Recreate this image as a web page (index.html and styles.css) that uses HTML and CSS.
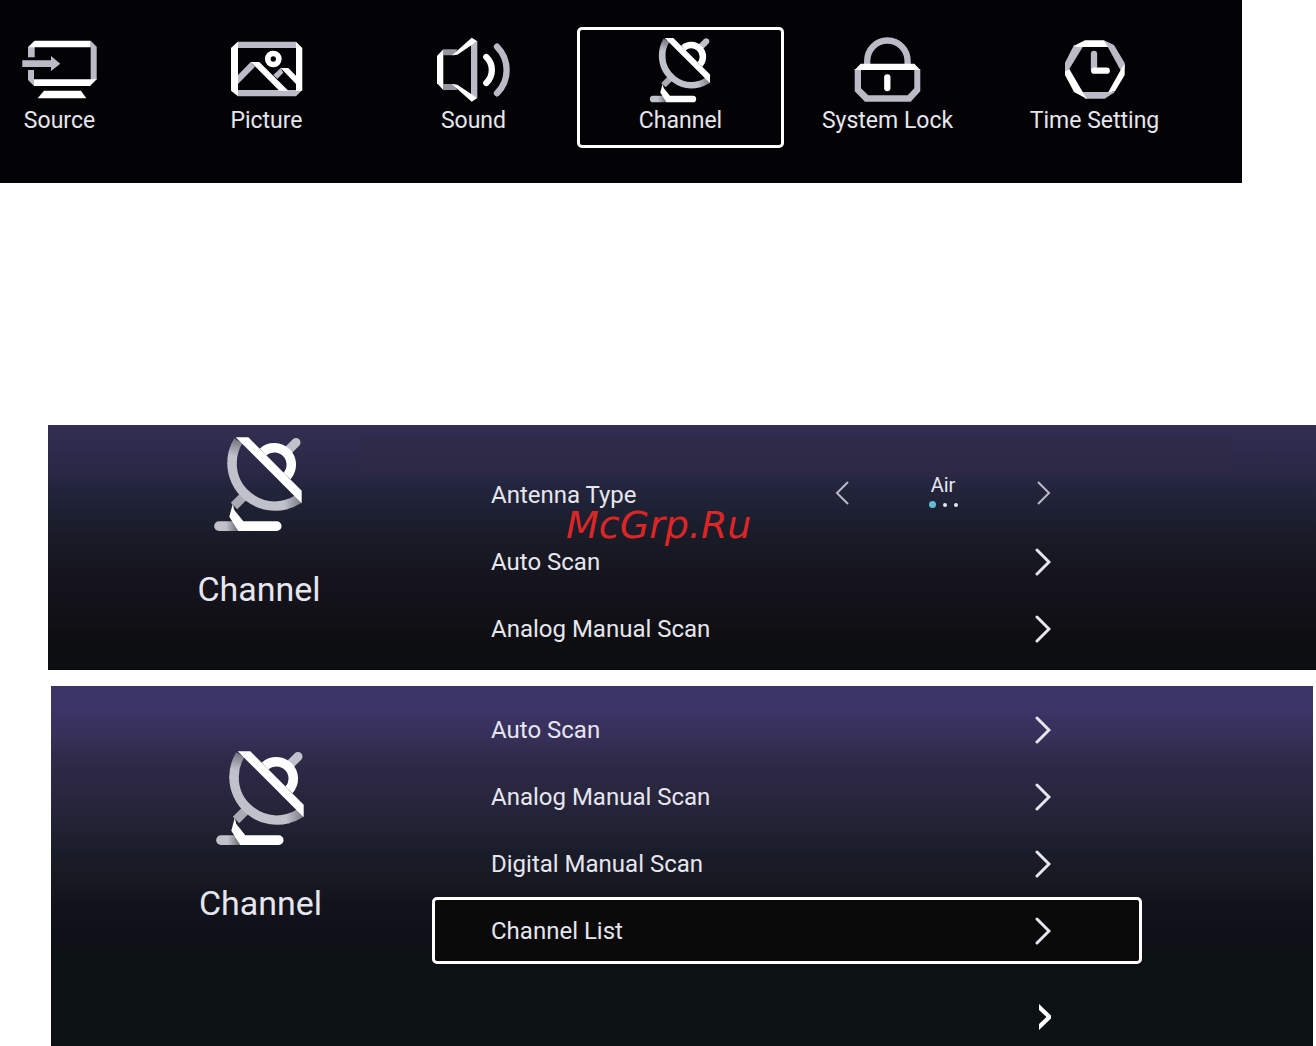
FILE: index.html
```
<!DOCTYPE html>
<html lang="en">
<head>
    <meta charset="UTF-8">
    <meta name="viewport" content="width=device-width, initial-scale=1.0">
    <title>Channel</title>
    <link rel="stylesheet" href="styles.css">
</head>
<body>
    <!-- shared icons -->
    <svg class="defs" width="0" height="0" aria-hidden="true">
        <defs>
            <linearGradient id="foldBowl" gradientUnits="userSpaceOnUse" x1="22" y1="2" x2="19" y2="20">
                <stop offset="0" stop-color="#6f7078"/>
                <stop offset="1" stop-color="#bfc1cb"/>
            </linearGradient>
            <linearGradient id="foldBase" gradientUnits="userSpaceOnUse" x1="12" y1="0" x2="23" y2="0">
                <stop offset="0" stop-color="#bfc1cb"/>
                <stop offset="1" stop-color="#70717a"/>
            </linearGradient>
            <linearGradient id="foldEnd" gradientUnits="userSpaceOnUse" x1="70" y1="0" x2="88" y2="0">
                <stop offset="0" stop-color="#bfc1cb"/>
                <stop offset="1" stop-color="#77787f"/>
            </linearGradient>
        </defs>
        <symbol id="dish" viewBox="0 0 88 96">
            <path d="M75 13.500L82 6.500" stroke="#bfc1cb" stroke-width="9" stroke-linecap="round"/>
            <path d="M30 60L20 70" stroke="#a9abb4" stroke-width="9"/>
            <path d="M18 27A43 43 0 0 0 72 68.600" fill="none" stroke="#bfc1cb" stroke-width="9.500"/>
            <path d="M24.300 4.700A43 43 0 0 0 18 28" fill="none" stroke="url(#foldBowl)" stroke-width="9.500"/>
            <path d="M71 68.900A43 43 0 0 0 84.500 63" fill="none" stroke="url(#foldEnd)" stroke-width="9.500"/>
            <path d="M49 16A17 17 0 0 1 73 40" fill="none" stroke="#fff" stroke-width="9.500"/>
            <path d="M21.700 1.300H34.300L87.700 54.700V67.300Z" fill="#fff"/>
            <path d="M5 85.300H22L25 95H5A4.800 4.800 0 0 1 5 85.300Z" fill="url(#foldBase)"/>
            <path d="M18.700 68L15.300 80.700L24.300 95H62.700A4.800 4.800 0 0 0 62.700 85.300H29.300L20.300 74Z" fill="#fff"/>
        </symbol>
        <symbol id="chevron" viewBox="0 0 16 28">
            <path d="M2 2L14 14L2 26" fill="none" stroke="currentColor" stroke-width="3" stroke-linecap="round"/>
        </symbol>
        <symbol id="chevron-thin" viewBox="0 0 14 24">
            <path d="M1 1L12 12L1 23" fill="none" stroke="currentColor" stroke-width="2"/>
        </symbol>
        <symbol id="chevron-bold" viewBox="0 0 12 28">
            <path d="M0 1L12 12.500V15.500L0 27V21L7.500 14L0 7Z" fill="currentColor"/>
        </symbol>
    </svg>

    <nav class="topbar">
        <div class="menu">
            <button class="menu-item">
                <svg class="menu-icon" viewBox="0 0 88 66">
                    <g fill="#bbbbc7">
                        <path d="M75.700 3.700L81.700 9.700V43H75.700Z"/>
                        <path d="M13 10L19.700 3.700V20.300H13Z"/>
                        <path d="M13 33H19V49L13 43Z"/>
                        <path d="M7.300 23.300H36V19L45.300 26.700L36 34V30H7.300Z"/>
                    </g>
                    <g fill="#fff">
                        <path d="M19.700 3.700H75.700V10.300H13.300Z"/>
                        <path d="M19 42.300H81.700L75 49H19Z"/>
                        <path d="M29 53.700H66L71.300 61.300H22.700Z"/>
                    </g>
                </svg>
                <span>Source</span>
            </button>
            <button class="menu-item">
                <svg class="menu-icon" viewBox="0 0 88 66">
                    <g fill="#bbbbc7">
                        <path d="M16 4.700H74V11H9.300Z"/>
                        <path d="M16 53H80.300L74 59.300H16Z"/>
                        <path d="M28.700 25L33 29.700L16 47V38Z"/>
                        <path d="M58.700 31L61.300 35.700L55.300 41.700L51.300 38Z"/>
                    </g>
                    <g fill="#fff">
                        <path d="M74 4.700L80.300 11V53.700H74Z"/>
                        <path d="M9 11L16 4.700V59.300L9 53.700Z"/>
                        <path d="M28.700 25H37.300L66.300 53.700H57.300Z"/>
                        <path d="M58.700 31H66.300L74 38.700V47Z"/>
                    </g>
                    <circle cx="51.300" cy="22" r="5.500" fill="none" stroke="#fff" stroke-width="5.700"/>
                </svg>
                <span>Picture</span>
            </button>
            <button class="menu-item">
                <svg class="menu-icon" viewBox="0 0 88 66">
                    <g fill="#bbbbc7">
                        <path d="M42 8L48.300 4.300V61L42 57.400Z"/>
                    </g>
                    <g fill="#9696a0">
                        <path d="M14.300 12.300H28.300L25 18.300H14.300Z"/>
                        <path d="M14.300 47H25L28.300 53H14.300Z"/>
                    </g>
                    <g fill="#fff">
                        <path d="M8 19L14.300 12.300V53L8 46.300Z"/>
                        <path d="M42.700 0.700L48.300 4.300L28.300 17.700L23 18.300L27 14.700Z"/>
                        <path d="M42.700 64.700L48.300 61L28.300 47.700L23 47L27 50.700Z"/>
                    </g>
                    <g fill="none" stroke-width="6.300" stroke-linecap="round">
                        <path d="M57.300 20A18 18 0 0 1 57.300 46" stroke="#fff"/>
                        <path d="M68 9.700A33 33 0 0 1 68 56.300" stroke="#bbbbc7"/>
                    </g>
                </svg>
                <span>Sound</span>
            </button>
            <button class="menu-item selected">
                <svg class="menu-icon"><use href="#dish"/></svg>
                <span>Channel</span>
            </button>
            <button class="menu-item">
                <svg class="menu-icon" viewBox="0 0 88 66">
                    <path d="M24.200 28V23.700A20.200 20.200 0 0 1 64.600 23.700V28" fill="none" stroke="#bbbbc7" stroke-width="6.300"/>
                    <path d="M11.700 32V54.300L22 64.700H67.700L77.300 54.300V32H71.300V51.300L64.700 58.300H25.300L18 51.300V32Z" fill="#bbbbc7"/>
                    <path d="M17.700 26.700H71.300L77.300 33H11.700Z" fill="#fff"/>
                    <path d="M44.300 40.300V51" stroke="#fff" stroke-width="6.300" stroke-linecap="round"/>
                </svg>
                <span>System Lock</span>
            </button>
            <button class="menu-item">
                <svg class="menu-icon" viewBox="0 0 88 66">
                    <g fill="#bbbbc7">
                        <path d="M54 3.300L64 8L74.700 26V31L72 36L57.300 9Z"/>
                        <path d="M33 55H65L54.700 61.700H35Z"/>
                        <path d="M24 8L33 9.500L19.300 32L15 37V25.700Z"/>
                    </g>
                    <g fill="#fff">
                        <path d="M35 3.300H54L58.300 10H26L24.500 8.500Z"/>
                        <path d="M74.700 26.700V38L65 54.300L58 55.700L69.500 35Z"/>
                        <path d="M15 34.700L19.300 32L36.700 61.700L24 55L15 38Z"/>
                    </g>
                    <g stroke-width="6.300" stroke-linecap="round">
                        <path d="M44 17V33" stroke="#bbbbc7"/>
                        <path d="M44.300 33.700H56.700" stroke="#fff"/>
                    </g>
                </svg>
                <span>Time Setting</span>
            </button>
        </div>
    </nav>

    <main>
        <section class="panel panel-antenna">
            <div class="side">
                <svg class="side-icon"><use href="#dish"/></svg>
                <h2>Channel</h2>
            </div>
            <div class="list">
                <div class="row">
                    <span>Antenna Type</span>
                    <div class="stepper">
                        <button aria-label="Previous"><svg class="thin flip"><use href="#chevron-thin"/></svg></button>
                        <div class="value">
                            <span>Air</span>
                            <div class="dots"><i class="on"></i><i></i><i></i></div>
                        </div>
                        <button aria-label="Next"><svg class="thin"><use href="#chevron-thin"/></svg></button>
                    </div>
                </div>
                <button class="row"><span>Auto Scan</span><svg class="chevron"><use href="#chevron"/></svg></button>
                <button class="row"><span>Analog Manual Scan</span><svg class="chevron"><use href="#chevron"/></svg></button>
            </div>
            <div class="watermark">McGrp.Ru</div>
        </section>

        <section class="panel panel-channel">
            <div class="side">
                <svg class="side-icon"><use href="#dish"/></svg>
                <h2>Channel</h2>
            </div>
            <div class="list">
                <button class="row"><span>Auto Scan</span><svg class="chevron"><use href="#chevron"/></svg></button>
                <button class="row"><span>Analog Manual Scan</span><svg class="chevron"><use href="#chevron"/></svg></button>
                <button class="row"><span>Digital Manual Scan</span><svg class="chevron"><use href="#chevron"/></svg></button>
                <button class="row selected"><span>Channel List</span><svg class="chevron"><use href="#chevron"/></svg></button>
                <button class="row more" aria-label="More"><svg class="bold"><use href="#chevron-bold"/></svg></button>
            </div>
        </section>
    </main>
</body>
</html>
```
FILE: styles.css
```
* {
    box-sizing: border-box;
}
body {
    margin: 0;
    background: #fff;
    color: #e6e6ee;
    font-family: Roboto, "Liberation Sans", sans-serif;
    font-size: 24px;
}
button {
    margin: 0;
    padding: 0;
    border: none;
    background: none;
    color: inherit;
    font: inherit;
    text-align: left;
    cursor: pointer;
}
svg {
    display: block;
    flex: none;
}
.defs {
    position: absolute;
}

/* top menu */
.topbar {
    margin-right: 74px;
    padding: 27px 0 35px;
    background: #030305;
    overflow: hidden;
}
.menu {
    display: grid;
    grid-template-columns: repeat(6, 1fr);
    margin: 0 44px 0 -44px;
}
.menu-item {
    display: flex;
    flex-direction: column;
    align-items: center;
    padding: 7px 0 9px;
    border: 3px solid transparent;
    border-radius: 5px;
    font-size: 23px;
    line-height: 30px;
    white-space: nowrap;
}
.menu-item.selected {
    border-color: #fff;
}
.menu-icon {
    width: 88px;
    height: 66px;
    margin: 0 1px 3px 0;
}

/* panels */
.panel {
    position: relative;
    display: grid;
}
.panel-antenna {
    grid-template-columns: 384fr 710fr 174fr;
    margin: 242px 0 16px 48px;
    padding: 11px 0 8px;
    background:
        linear-gradient(#2e2a49, #2c2844) no-repeat 313px 11px / calc(100% - 397px) 41px,
        linear-gradient(#332e52, #292846 18%, #1e2133 34%, #181a25 48%, #14121b 68%, #111016 80%, #0d0e0f 90%, #0d0e0f);
}
.panel-channel {
    grid-template-columns: 381fr 710fr 171fr;
    margin: 0 3px 0 51px;
    padding-top: 10px;
    background: linear-gradient(#3b3468, #3b3465 7%, #37305a 14%, #2e2a47 21%, #2b2742 27%, #232336 37%, #191c28 47%, #191923 53%, #13131c 60%, #0f111a 68%, #0c1113 76%, #0c1113);
}
.side {
    display: flex;
    flex-direction: column;
    align-items: center;
    padding-left: 38px;
}
.side-icon {
    width: 88px;
    height: 96px;
    margin-right: 2px;
}
.panel-channel .side {
    padding-top: 54px;
}
.side h2 {
    margin: 36px 0 0;
    font-size: 34px;
    font-weight: 400;
    line-height: 42px;
}
.list {
    display: flex;
    flex-direction: column;
}
.panel-antenna .list {
    padding-top: 25px;
}
.row {
    display: flex;
    align-items: center;
    justify-content: space-between;
    height: 67px;
    padding: 0 88px 0 56px;
    border: 3px solid transparent;
    border-radius: 5px;
}
.row.selected {
    border-color: #fff;
    background: #0a0a0b;
}
.row.more {
    justify-content: flex-end;
    height: 62px;
    margin-top: 20px;
    padding-top: 4px;
    color: #fff;
}
.chevron {
    width: 16px;
    height: 28px;
}
.bold {
    width: 12px;
    height: 28px;
}
.thin {
    width: 14px;
    height: 24px;
    color: #b9bac8;
}
.flip {
    transform: scaleX(-1);
}

/* antenna value */
.stepper {
    display: flex;
    align-items: center;
    justify-content: space-between;
    width: 216px;
    padding-bottom: 4px;
}
.value {
    display: flex;
    flex-direction: column;
    align-items: center;
    font-size: 20px;
    line-height: 24px;
}
.dots {
    display: flex;
    align-items: center;
    gap: 7px;
    height: 16px;
}
.dots i {
    width: 4px;
    height: 4px;
    border-radius: 50%;
    background: #e6e6ee;
}
.dots .on {
    width: 7px;
    height: 7px;
    background: #62bcd3;
}
.watermark {
    position: absolute;
    top: 80px;
    left: 518px;
    color: #dc2626;
    font-family: "DejaVu Sans", sans-serif;
    font-size: 38px;
    font-style: italic;
    line-height: 40px;
}
```
